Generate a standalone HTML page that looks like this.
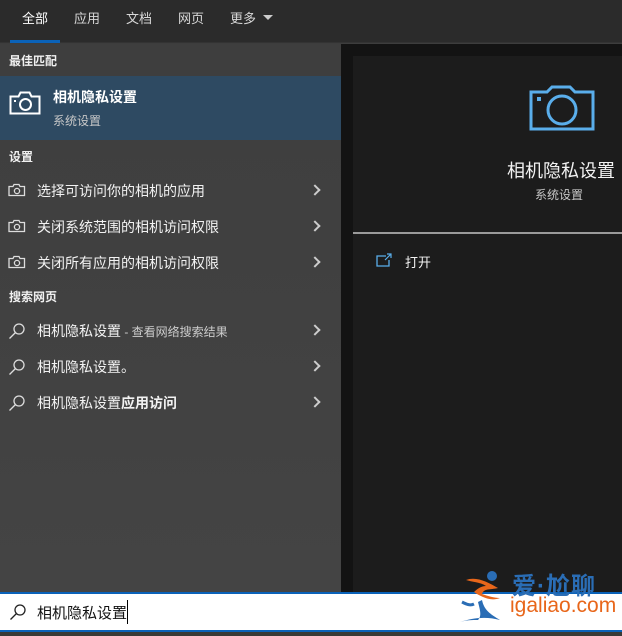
<!DOCTYPE html>
<html><head><meta charset="utf-8"><style>
*{margin:0;padding:0;box-sizing:border-box}
body{width:622px;height:636px;overflow:hidden;background:#3d3d3d;font-family:"Liberation Sans","Noto Sans CJK SC",sans-serif;position:relative;color:#fff}
.tabs{position:absolute;left:0;top:0;width:622px;height:43px;background:#2b2b2b;border-bottom:1px solid #333}
.tab{position:absolute;top:8px;font-size:13px;color:#d8d8d8}
.ul{position:absolute;left:10px;top:40px;width:50px;height:3px;background:#0a62b8}
.left{position:absolute;left:0;top:44px;width:341px;height:548px;background:linear-gradient(#3e3e3e,#444)}
.hdr{position:absolute;left:9px;font-size:12px;font-weight:bold;color:#f0f0f0}
.best{position:absolute;left:0;top:76px;width:341px;height:64px;background:#2e4a62}
.row{position:absolute;left:37px;font-size:14px;color:#f2f2f2;white-space:nowrap}
.chev{position:absolute;left:311px;width:8px;height:8px;border-right:2px solid #ccc;border-top:2px solid #ccc;transform:rotate(45deg)}
.ico{position:absolute;left:8px}
.rightb{position:absolute;left:341px;top:44px;width:281px;height:548px;background:#131313}
.rightp{position:absolute;left:353px;top:56px;width:269px;height:536px;background:#1c1c1c}
.search{position:absolute;left:0;top:592px;width:622px;height:40px;background:#fff;border-top:2px solid #0a62b8;border-bottom:2px solid #0a62b8}
.bot{position:absolute;left:0;top:632px;width:622px;height:4px;background:#3a3a35}
</style></head><body>
<div class="tabs">
<span class="tab" style="left:22px;color:#fff">全部</span>
<span class="tab" style="left:74px">应用</span>
<span class="tab" style="left:126px">文档</span>
<span class="tab" style="left:178px">网页</span>
<span class="tab" style="left:230px">更多</span>
<svg style="position:absolute;left:262px;top:14px" width="12" height="8"><path d="M1 1h10L6 6z" fill="#ccc"/></svg>
<div class="ul"></div>
</div>
<div class="left">
</div>
<div class="hdr" style="top:52px">最佳匹配</div>
<div class="best">
<svg style="position:absolute;left:9px;top:14px" width="32" height="26" viewBox="0 0 32 26"><path d="M1.5 6.5h8l2-4h9l2 4h8v17h-29z" fill="none" stroke="#fff" stroke-width="2"/><circle cx="16.5" cy="14.5" r="5.5" fill="none" stroke="#fff" stroke-width="2"/><rect x="5" y="10" width="2" height="2" fill="#fff"/></svg>
<div style="position:absolute;left:53px;top:11px;font-size:14px;font-weight:bold">相机隐私设置</div>
<div style="position:absolute;left:53px;top:36px;font-size:12px;color:#c8c8c8">系统设置</div>
</div>
<div class="hdr" style="top:148px">设置</div>
<svg class="ico" style="top:183px" width="18" height="14" viewBox="0 0 18 14"><path d="M1 3.5h4l1-2h5l1 2h4.5v9H1z" fill="none" stroke="#ddd" stroke-width="1.3"/><circle cx="9" cy="8" r="2.6" fill="none" stroke="#ddd" stroke-width="1.3"/></svg>
<div class="row" style="top:181px">选择可访问你的相机的应用</div><div class="chev" style="top:186px"></div>
<svg class="ico" style="top:219px" width="18" height="14" viewBox="0 0 18 14"><path d="M1 3.5h4l1-2h5l1 2h4.5v9H1z" fill="none" stroke="#ddd" stroke-width="1.3"/><circle cx="9" cy="8" r="2.6" fill="none" stroke="#ddd" stroke-width="1.3"/></svg>
<div class="row" style="top:217px">关闭系统范围的相机访问权限</div><div class="chev" style="top:222px"></div>
<svg class="ico" style="top:255px" width="18" height="14" viewBox="0 0 18 14"><path d="M1 3.5h4l1-2h5l1 2h4.5v9H1z" fill="none" stroke="#ddd" stroke-width="1.3"/><circle cx="9" cy="8" r="2.6" fill="none" stroke="#ddd" stroke-width="1.3"/></svg>
<div class="row" style="top:253px">关闭所有应用的相机访问权限</div><div class="chev" style="top:258px"></div>
<div class="hdr" style="top:288px">搜索网页</div>
<svg class="ico" style="top:322px" width="18" height="18" viewBox="0 0 18 18"><circle cx="11" cy="7" r="5" fill="none" stroke="#ddd" stroke-width="1.3"/><path d="M7.5 10.5L1.5 16.5" stroke="#ddd" stroke-width="1.3"/></svg>
<div class="row" style="top:321px">相机隐私设置<span style="font-size:12px;color:#ccc"> - 查看网络搜索结果</span></div><div class="chev" style="top:326px"></div>
<svg class="ico" style="top:358px" width="18" height="18" viewBox="0 0 18 18"><circle cx="11" cy="7" r="5" fill="none" stroke="#ddd" stroke-width="1.3"/><path d="M7.5 10.5L1.5 16.5" stroke="#ddd" stroke-width="1.3"/></svg>
<div class="row" style="top:357px">相机隐私设置。</div><div class="chev" style="top:362px"></div>
<svg class="ico" style="top:394px" width="18" height="18" viewBox="0 0 18 18"><circle cx="11" cy="7" r="5" fill="none" stroke="#ddd" stroke-width="1.3"/><path d="M7.5 10.5L1.5 16.5" stroke="#ddd" stroke-width="1.3"/></svg>
<div class="row" style="top:393px">相机隐私设置<b>应用访问</b></div><div class="chev" style="top:398px"></div>

<div class="rightb"></div>
<div class="rightp">
<svg style="position:absolute;left:176px;top:22px" width="66" height="54" viewBox="0 0 66 54"><path d="M2 14h16l5-5h18l5 5h18v37H2z" fill="none" stroke="#5aaeeb" stroke-width="3"/><circle cx="33" cy="32" r="14" fill="none" stroke="#5aaeeb" stroke-width="3"/><rect x="8" y="19" width="4" height="4" fill="#5aaeeb"/></svg>
<div style="position:absolute;left:154px;top:101px;font-size:18px;color:#f2f2f2">相机隐私设置</div>
<div style="position:absolute;left:182px;top:130px;font-size:12px;color:#c8c8c8">系统设置</div>
<div style="position:absolute;left:0;top:176px;width:269px;height:2px;background:#9a9a9a"></div>
<svg style="position:absolute;left:23px;top:197px" width="16" height="14" viewBox="0 0 16 14"><path d="M10 3H1v10h12V7" fill="none" stroke="#5aaeeb" stroke-width="1.3"/><path d="M9 7l6-6M11 1h4v4" fill="none" stroke="#5aaeeb" stroke-width="1.2"/></svg>
<div style="position:absolute;left:52px;top:196px;font-size:13px;color:#f2f2f2">打开</div>
</div>
<div class="search">
<svg style="position:absolute;left:9px;top:9px" width="18" height="18" viewBox="0 0 18 18"><circle cx="11" cy="7" r="5" fill="none" stroke="#222" stroke-width="1.3"/><path d="M7.5 10.5L1.5 16.5" stroke="#222" stroke-width="1.3"/></svg>
<div style="position:absolute;left:37px;top:8px;font-size:15px;color:#111">相机隐私设置</div>
<div style="position:absolute;left:127px;top:6px;width:1px;height:24px;background:#000"></div>
</div>
<div class="bot"></div>
<div style="position:absolute;left:512px;top:566px;font-size:24px;font-weight:bold;color:#2a6db5;letter-spacing:1px">爱·尬聊</div>
<div style="position:absolute;left:510px;top:594px;font-size:21px;color:#e8661a">igaliao.com</div>
<svg style="position:absolute;left:458px;top:570px" width="60" height="56" viewBox="0 0 60 56"><circle cx="34" cy="6" r="5" fill="#2a6db5"/><path d="M8 10c10-4 22 2 32 8-8 2-14 0-16 6 6 2 12 4 18 4-10 4-20-2-26-6 4-4 8-6 12-6-6-4-14-4-20-6z" fill="#e8661a"/><path d="M2 52c12-4 26-6 40-2-10-6-16-10-18-20l-4 2c2 8 4 14 0 18-6 0-12 0-18 2z" fill="#2a6db5"/><path d="M4 32c4 2 8 4 12 2" stroke="#2a6db5" stroke-width="3" fill="none"/></svg>
</body></html>
